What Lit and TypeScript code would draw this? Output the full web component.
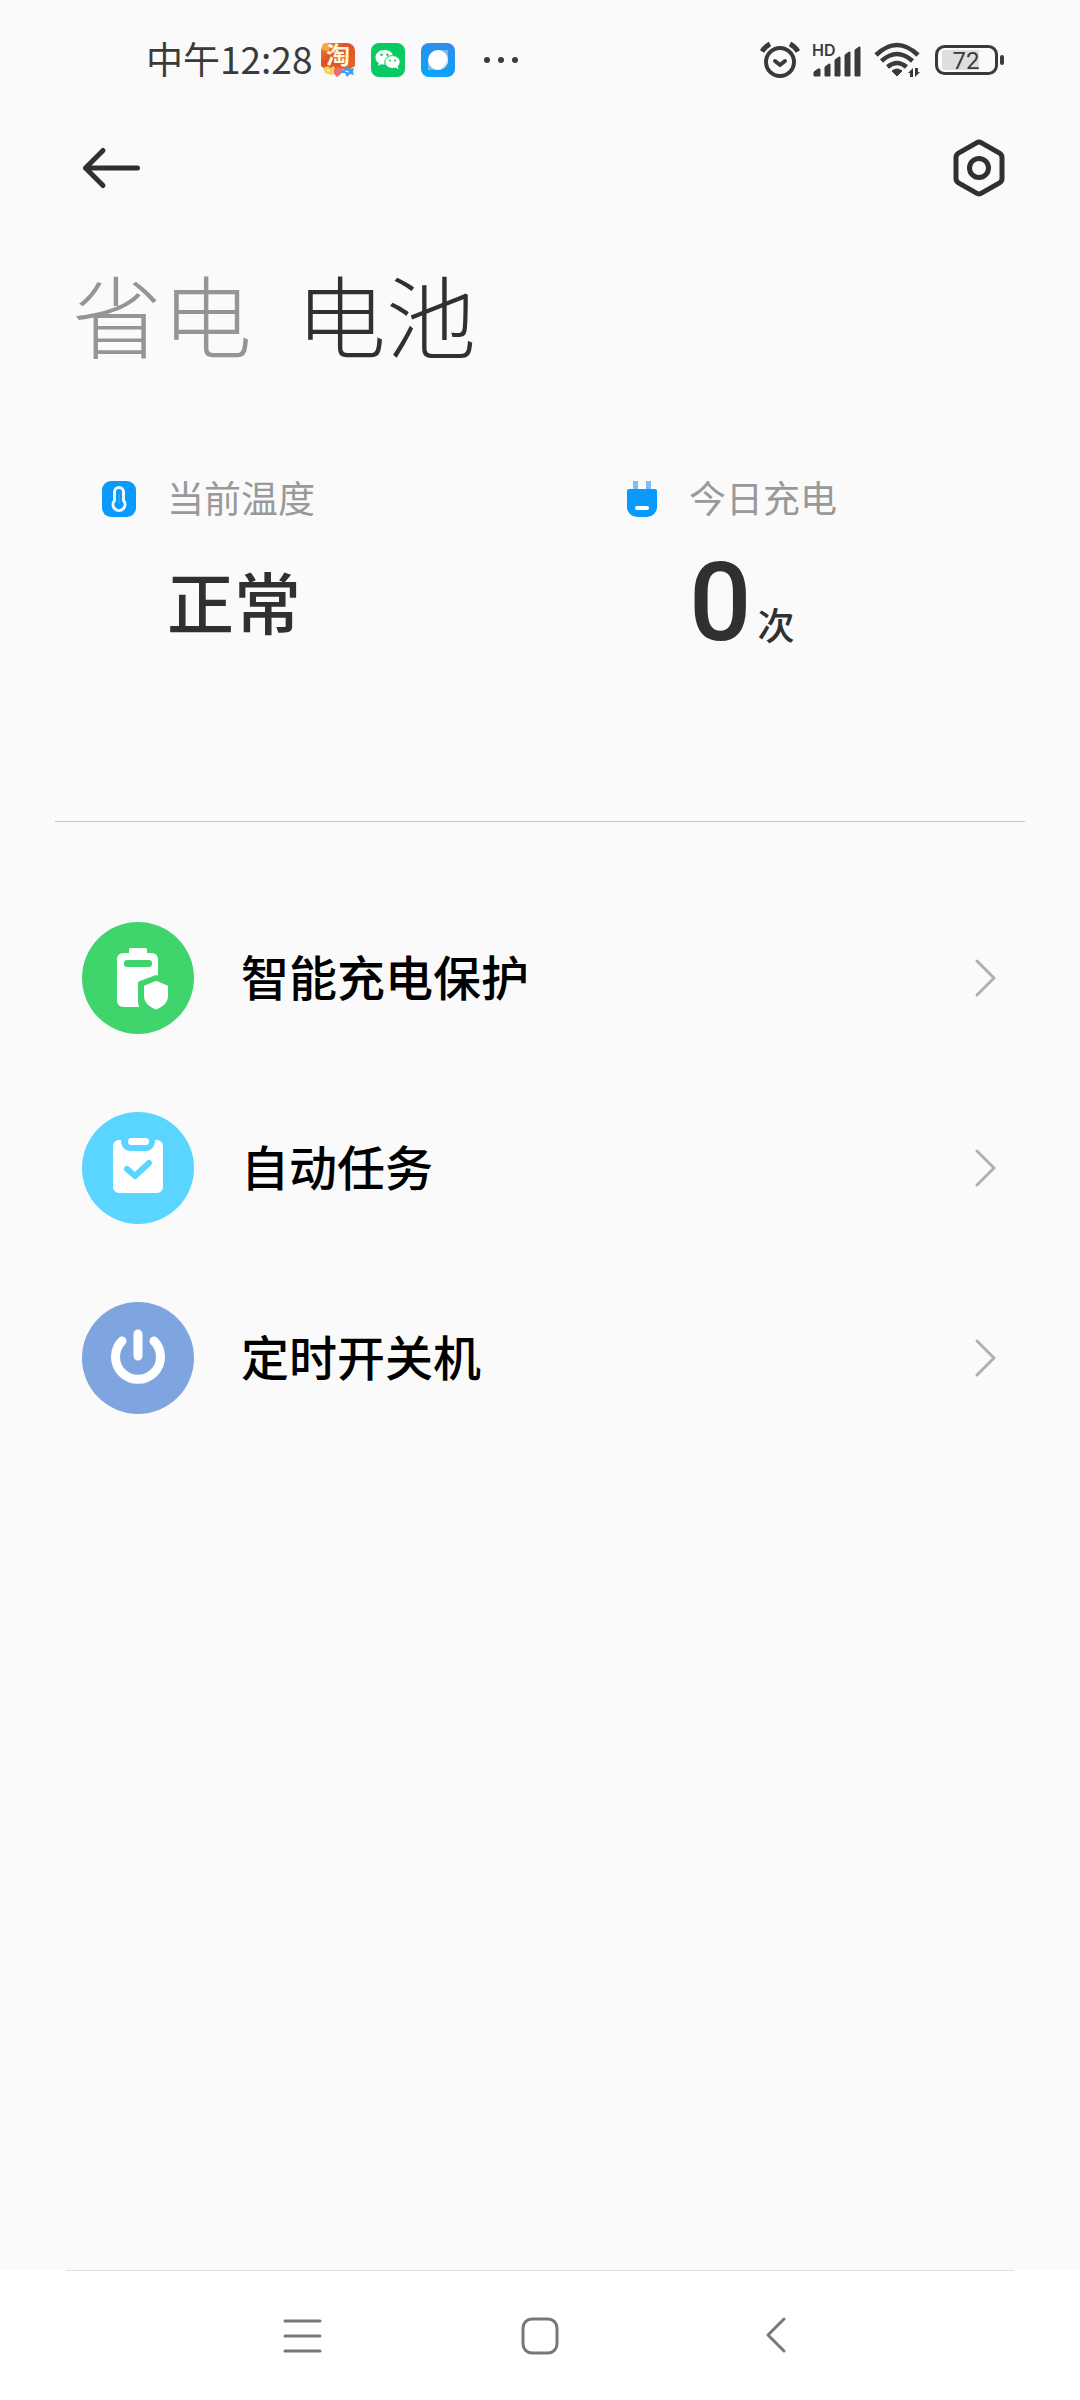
import { LitElement, html, css, svg } from "lit";
import { customElement, property, state } from "lit/decorators.js";

const baseFont = css`"Noto Sans CJK SC", "Noto Sans", sans-serif`;

@customElement("status-bar")
class StatusBar extends LitElement {
  static styles = css`
    :host {
      display: flex;
      align-items: center;
      justify-content: space-between;
      height: 120px;
      padding: 0 76px 0 146px;
      color: #3a3a3a;
    }
    .group {
      display: flex;
      align-items: center;
    }
    .apps {
      gap: 16px;
    }
    .time {
      font: 400 37px/48px ${baseFont};
      margin-right: -7px;
      padding-bottom: 4px;
    }
    .system {
      gap: 12px;
    }
    svg {
      display: block;
      flex: none;
    }
    .glyph {
      font: 700 24px ${baseFont};
    }
    .hd {
      font: 600 16px Inter, sans-serif;
    }
    .level {
      font: 400 24px Roboto, sans-serif;
    }
  `;

  render() {
    return html`
      <div class="group apps">
        <span class="time">中午12:28</span>
        <svg width="34" height="50" viewBox="0 -8 34 50" role="img" aria-label="淘宝">
          <defs>
            <linearGradient id="tb" x1="0" y1="0" x2="1" y2="1">
              <stop offset="0" stop-color="#f08a3a" />
              <stop offset="0.4" stop-color="#dd5327" />
              <stop offset="1" stop-color="#e8622c" />
            </linearGradient>
          </defs>
          <path d="M8 0h18a8 8 0 0 1 8 8v15l-5 3H4l-4-3V8a8 8 0 0 1 8-8z" fill="url(#tb)" />
          <circle cx="5" cy="4" r="4" fill="#f6a83c" />
          <text class="glyph" x="17" y="21" text-anchor="middle" fill="#fff4dc">淘</text>
          <path d="M2 25l5-2 2 2 4-2 2 5-4 4-7-2z" fill="#f5cf52" />
          <path d="M13 26l4-2 4 2-1 5-4 3-3-3z" fill="#ef6b72" />
          <path d="M20 27l4-1 2-3 3 3 4-1-1 4 1 3-4-1-3 3-2-4-4 0z" fill="#3f9ff0" />
          <path d="M6 27l3 1M24 28l4 1" stroke="#fff" stroke-width="1" />
        </svg>
        <svg width="34" height="34" viewBox="0 0 34 34" role="img" aria-label="微信">
          <rect width="34" height="34" rx="8" fill="#0acb62" />
          <path d="M13.500 7c-5 0-9 3.300-9 7.400 0 2.300 1.300 4.300 3.300 5.700l-.8 2.700 3.200-1.600c1 .3 2.100.5 3.300.5a10 10 0 0 1 8.500-9C21.300 9.300 17.800 7 13.500 7z" fill="#fff" />
          <ellipse cx="21.500" cy="19" rx="7.700" ry="6.500" fill="#fff" stroke="#0acb62" stroke-width="1" />
          <path d="M24 24l3.500 2.500-.8-3.600z" fill="#fff" />
          <circle cx="10.500" cy="11.700" r="1.200" fill="#0acb62" />
          <circle cx="16.500" cy="11.700" r="1.200" fill="#0acb62" />
          <circle cx="19" cy="17.500" r="1" fill="#0acb62" />
          <circle cx="24" cy="17.500" r="1" fill="#0acb62" />
        </svg>
        <svg width="34" height="34" viewBox="0 0 34 34" role="img" aria-label="浏览器">
          <defs>
            <linearGradient id="br" x1="0.600" y1="0" x2="0.300" y2="1">
              <stop offset="0" stop-color="#2f8de8" />
              <stop offset="1" stop-color="#08a4fd" />
            </linearGradient>
          </defs>
          <rect width="34" height="34" rx="8" fill="url(#br)" />
          <path d="M16 7h11v9c0 6-4.500 11-11 11H7v-8" fill="#72bdf7" />
          <circle cx="17" cy="17" r="10" fill="#fff" />
          <path d="M27 14c1 8-4 13-10 13 5-2 9-7 10-13z" fill="#c9e2f8" />
        </svg>
        <svg width="50" height="34" viewBox="0 0 50 34" aria-hidden="true" fill="#3a3a3a">
          <circle cx="16" cy="17" r="3" />
          <circle cx="30" cy="17" r="3" />
          <circle cx="44" cy="17" r="3" />
        </svg>
      </div>
      <div class="group system">
        <svg width="40" height="38" viewBox="0 0 40 38" role="img" aria-label="闹钟" fill="none" stroke="#3a3a3a" stroke-linecap="round" stroke-linejoin="round">
          <circle cx="20" cy="21" r="14" stroke-width="4" />
          <path d="M15 20l5 4 5-4" stroke-width="4" />
          <path d="M2 10.500Q5 5.500 10 3M38 10.500Q35 5.500 30 3" stroke-width="5" stroke-linecap="butt" />
        </svg>
        <svg width="50" height="46" viewBox="0 -5 50 46" role="img" aria-label="HD 信号" fill="#3a3a3a">
          <text class="hd" x="0" y="14">HD</text>
          <path d="M2 34v-4l4-3h2v7zM13 34v-9l4-3h1v12zM23 34V18l4-3h1v19zM33 34V13l4-3h1v24zM43 34V8l4-3h1v29z" stroke="#3a3a3a" stroke-width="1" stroke-linejoin="round" />
        </svg>
        <svg width="48" height="36" viewBox="0 0 48 36" role="img" aria-label="无线网络">
          <g fill="none" stroke="#3a3a3a" stroke-width="4.500">
            <path d="M2 13Q23 -7 44 13" />
            <path d="M7.500 19Q23 5 38.500 19" />
            <path d="M13.500 25Q23 17 32.500 25" />
          </g>
          <path d="M18 29q5-4 10 0l-5 5z" fill="#3a3a3a" stroke="#3a3a3a" stroke-width="1" stroke-linejoin="round" />
          <path d="M34 31l5-5v9h-3v-4zM46 30l-5 5v-9h3v4z" fill="#3a3a3a" />
        </svg>
        <svg width="70" height="34" viewBox="0 0 70 34" role="img" aria-label="电量 72%">
          <rect x="2.500" y="3.500" width="60" height="27" rx="8" fill="none" stroke="#3a3a3a" stroke-width="3" />
          <path d="M11 7h34v20H11a3 3 0 0 1-3-3V10a3 3 0 0 1 3-3z" fill="#dedede" />
          <rect x="66" y="12" width="4" height="10" rx="2" fill="#3a3a3a" />
          <text class="level" x="32" y="26" text-anchor="middle" fill="#3a3a3a">72</text>
        </svg>
      </div>
    `;
  }
}

@customElement("metric-card")
class MetricCard extends LitElement {
  static styles = css`
    :host {
      display: grid;
      grid-template-columns: 36px 1fr;
      column-gap: 29px;
      row-gap: 28px;
      padding-left: 84px;
      align-items: center;
    }
    .label {
      height: 40px;
      font: 400 37px/36px ${baseFont};
      color: #999;
    }
    .value {
      grid-column: 2;
      display: flex;
      align-items: baseline;
      gap: 6px;
      height: 112px;
      color: #303030;
    }
    .text {
      font: 500 67px/106px ${baseFont};
    }
    .number {
      font: 500 110px/112px Roboto, sans-serif;
    }
    .unit {
      font: 500 37px/40px ${baseFont};
    }
  `;

  @property() label = "";
  @property() value = "";
  @property() unit = "";

  render() {
    return html`
      <slot></slot>
      <span class="label">${this.label}</span>
      <div class="value">
        <span class=${this.unit ? "number" : "text"}>${this.value}</span>
        ${this.unit ? html`<span class="unit">${this.unit}</span>` : ""}
      </div>
    `;
  }
}

const batteryShield = svg`
  <circle cx="56" cy="56" r="56" fill="#3fd46c" />
  <path d="M49 26h14a2 2 0 0 1 2 2v3h5a6 6 0 0 1 6 6v48H41a6 6 0 0 1-6-6V37a6 6 0 0 1 6-6h6v-3a2 2 0 0 1 2-2z" fill="#fff" />
  <rect x="42" y="38" width="28" height="7" rx="3" fill="#3fd46c" />
  <path d="M74 55l15 6v21L74 95l-12-6c-3-3-4-6-4-10V61z" fill="#3fd46c" stroke="#3fd46c" stroke-width="4" stroke-linejoin="round" />
  <path d="M74 60l11 4.500v10c0 6-5 9.500-11 12-6-2.500-11-6-11-12v-10z" fill="#fff" stroke="#fff" stroke-width="2" stroke-linejoin="round" />`;

const clipboardCheck = svg`
  <circle cx="56" cy="56" r="56" fill="#5ad5ff" />
  <path d="M37 28h2c0 7 4 11 9 11h16c5 0 9-4 9-11h2a6 6 0 0 1 6 6v41a6 6 0 0 1-6 6H37a6 6 0 0 1-6-6V34a6 6 0 0 1 6-6z" fill="#fff" />
  <rect x="46" y="26" width="21" height="7" rx="3.500" fill="#fff" />
  <path d="M45 57l8 7 14-13" fill="none" stroke="#5ad5ff" stroke-width="6" stroke-linecap="round" stroke-linejoin="round" />`;

const power = svg`
  <circle cx="56" cy="56" r="56" fill="#7ea5e0" />
  <path d="M40 39A22.500 22.500 0 1 0 72 39M56 32v22" fill="none" stroke="#fff" stroke-width="9" stroke-linecap="round" />`;

const entries = [
  { title: "智能充电保护", icon: batteryShield },
  { title: "自动任务", icon: clipboardCheck },
  { title: "定时开关机", icon: power },
];

@customElement("app-root")
class AppRoot extends LitElement {
  static styles = css`
    :host {
      display: flex;
      flex-direction: column;
      min-height: 100vh;
      background: #fafafa;
      font-family: ${baseFont};
    }
    svg {
      display: block;
      flex: none;
    }
    button {
      appearance: none;
      border: 0;
      margin: 0;
      padding: 0;
      background: none;
      font-family: inherit;
      cursor: pointer;
    }
    .toolbar {
      display: flex;
      align-items: center;
      justify-content: space-between;
      height: 96px;
      padding: 0 72px 0 80px;
    }
    .tabs {
      display: flex;
      gap: 44px;
      padding: 37px 72px 0;
    }
    .tab {
      font-size: 90px;
      line-height: 120px;
      font-weight: 300;
      color: #959595;
    }
    .tab.active {
      color: #303030;
    }
    .metrics {
      display: grid;
      grid-template-columns: 1fr 1fr;
      margin: 106px 18px 0;
    }
    .divider {
      height: 1px;
      border: 0;
      margin: 162px 55px 61px;
      background: #c4c4c4;
    }
    .list {
      list-style: none;
      margin: 0;
      padding: 0;
    }
    .row {
      display: flex;
      align-items: center;
      width: 100%;
      height: 190px;
      padding: 0 82px;
      gap: 47px;
      text-align: left;
    }
    .title {
      flex: 1;
      padding-bottom: 6px;
      font-size: 48px;
      line-height: 64px;
      font-weight: 500;
      color: #000;
    }
    .nav {
      margin-top: auto;
      background: #fff;
    }
    .line {
      height: 1px;
      margin: 0 66px;
      background: #e2e2e2;
    }
    .keys {
      display: flex;
      justify-content: center;
      gap: 197px;
      height: 129px;
      align-items: center;
    }
  `;

  @state() private active = 1;

  render() {
    return html`
      <status-bar></status-bar>
      <header class="toolbar">
        <button aria-label="返回">
          <svg width="62" height="44" viewBox="0 0 62 44" fill="none" stroke="#303030" stroke-width="5" stroke-linecap="round" stroke-linejoin="round">
            <path d="M5.500 22h52M23 4.500L5.500 22 23 39.500" />
          </svg>
        </button>
        <button aria-label="设置">
          <svg width="58" height="60" viewBox="0 0 58 60" fill="none" stroke="#303030" stroke-width="5" stroke-linejoin="round">
            <path d="M26.500 4.800a5 5 0 0 1 5 0l18 10.400a5 5 0 0 1 2.500 4.300v21a5 5 0 0 1-2.500 4.300L31.500 55.200a5 5 0 0 1-5 0L8.500 44.800a5 5 0 0 1-2.500-4.300v-21a5 5 0 0 1 2.500-4.300z" />
            <circle cx="29" cy="30" r="9.500" />
          </svg>
        </button>
      </header>
      <nav class="tabs">
        ${["省电", "电池"].map(
          (name, i) => html`<button class="tab ${i === this.active ? "active" : ""}" @click=${() => (this.active = i)}>${name}</button>`
        )}
      </nav>
      <section class="metrics">
        <metric-card label="当前温度" value="正常">
          <svg width="36" height="36" viewBox="0 0 36 36" aria-hidden="true">
            <rect width="34" height="36" rx="9" fill="#0a9afc" />
            <path d="M12.500 11a4.500 4.500 0 0 1 9 0v8.500a6 6 0 1 1-9 0z" fill="none" stroke="#eef9ff" stroke-width="3" />
            <path d="M17 13v10" stroke="#43b1fb" stroke-width="1" />
          </svg>
        </metric-card>
        <metric-card label="今日充电" value="0" unit="次">
          <svg width="36" height="36" viewBox="0 0 36 36" aria-hidden="true">
            <path d="M9 0h5v9H9zM22 0h5v9h-5z" fill="#80bdf5" />
            <path d="M5 8h26a2 2 0 0 1 2 2v16a10 10 0 0 1-10 10H13A10 10 0 0 1 3 26V10a2 2 0 0 1 2-2z" fill="#0a9afc" />
            <rect x="11" y="25" width="14" height="4" rx="2" fill="#fff" />
          </svg>
        </metric-card>
      </section>
      <hr class="divider" />
      <ul class="list">
        ${entries.map(
          (entry) => html`
            <li>
              <button class="row">
                <svg width="112" height="112" viewBox="0 0 112 112" aria-hidden="true">${entry.icon}</svg>
                <span class="title">${entry.title}</span>
                <svg width="26" height="42" viewBox="0 0 26 42" fill="none" stroke="#b0b0b0" stroke-width="3" stroke-linecap="round" stroke-linejoin="round" aria-hidden="true">
                  <path d="M5 4l17 17L5 38" />
                </svg>
              </button>
            </li>
          `
        )}
      </ul>
      <footer class="nav">
        <div class="line"></div>
        <div class="keys">
          <button aria-label="最近任务">
            <svg width="40" height="40" viewBox="0 0 40 40" stroke="#787878" stroke-width="3" stroke-linecap="round">
              <path d="M2 5h35M2 20h35M2 35h35" />
            </svg>
          </button>
          <button aria-label="主屏幕">
            <svg width="40" height="40" viewBox="0 0 40 40" fill="none" stroke="#787878" stroke-width="3">
              <rect x="3" y="3" width="34" height="34" rx="9" />
            </svg>
          </button>
          <button aria-label="返回上一级">
            <svg width="40" height="40" viewBox="0 0 40 40" fill="none" stroke="#787878" stroke-width="3" stroke-linecap="round" stroke-linejoin="round">
              <path d="M27 3L11 19l16 16" />
            </svg>
          </button>
        </div>
      </footer>
    `;
  }
}
